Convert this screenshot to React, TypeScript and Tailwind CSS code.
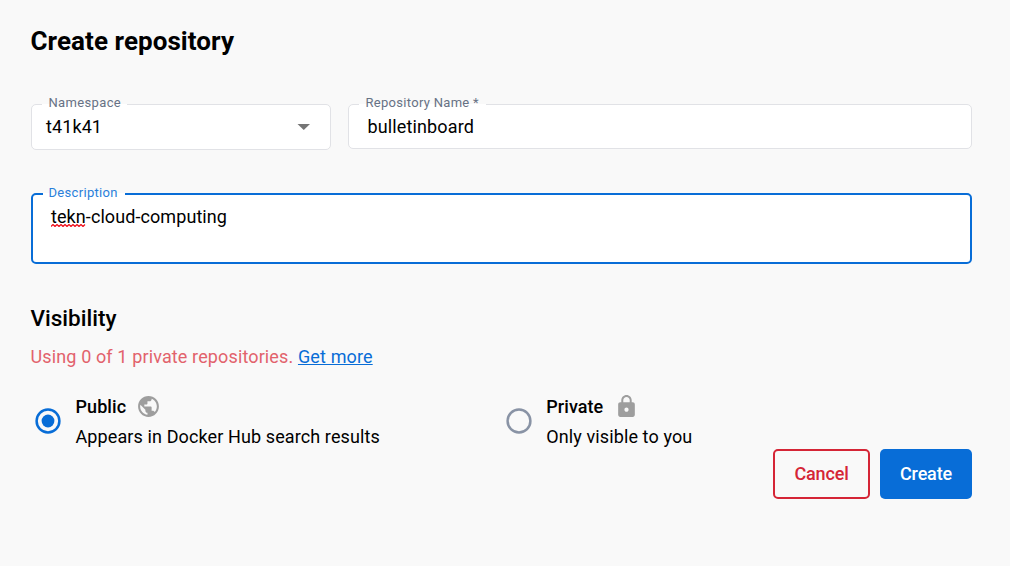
import { type ReactNode } from "react";

function OutlinedField({
  label,
  className,
  labelClassName,
  notchClassName,
  children,
}: {
  label: string;
  className: string;
  labelClassName: string;
  notchClassName: string;
  children: ReactNode;
}) {
  return (
    <div className={`relative rounded-[5px] bg-white ${className}`}>
      <span className={`absolute left-[10px] bg-white ${notchClassName}`} />
      <span className={`absolute whitespace-nowrap text-[13px] leading-4 ${labelClassName}`}>
        {label}
      </span>
      {children}
    </div>
  );
}

function Radio({ checked }: { checked?: boolean }) {
  return (
    <svg className="size-[26px] shrink-0" viewBox="0 0 26 26" fill="none">
      <circle cx="13" cy="13" r="11.400" strokeWidth="2.500" stroke={checked ? "#086dd7" : "#8993a5"} />
      {checked && <circle cx="13" cy="13" r="6.400" fill="#086dd7" />}
    </svg>
  );
}

function Option({
  title,
  text,
  icon,
  checked,
}: {
  title: string;
  text: string;
  icon: ReactNode;
  checked?: boolean;
}) {
  return (
    <div className="flex w-[470.75px] shrink-0 items-center">
      <Radio checked={checked} />
      <div className="ml-[14.5px]">
        <div className="flex h-[30px] items-center gap-[10.5px]">
          <span className="pt-[2px] text-[18px] font-medium leading-7 tracking-[0.07px]">{title}</span>
          {icon}
        </div>
        <div className="pt-px text-[18px] leading-[29px] tracking-[0.11px]">{text}</div>
      </div>
    </div>
  );
}

export default function App() {
  return (
    <main className="h-[566px] w-[1010px] overflow-hidden bg-[#f9f9f9] pl-[31px] pr-[38px] pt-[25px] font-['Roboto',sans-serif] text-black">
      <h1 className="-ml-[0.5px] h-8 text-[26px] font-bold leading-8 tracking-[0.07px]">Create repository</h1>

      <div className="mt-[47px] flex items-start gap-[17px]">
        <OutlinedField
          label="Namespace"
          className="flex h-[46px] w-[300px] items-center justify-between border border-[#e1e2e6] pl-[14px] pr-[20px]"
          labelClassName="left-[16.500px] -top-[10px] text-[#677285] tracking-[0.35px]"
          notchClassName="-top-px h-px w-[85px]"
        >
          <span className="text-[18px] leading-6 tracking-[0.1px]">t41k41</span>
          <svg className="h-[6px] w-[13px]" viewBox="0 0 13 6" fill="#757575">
            <path d="M.5 0h12.500L6.750 6z" />
          </svg>
        </OutlinedField>
        <OutlinedField
          label="Repository Name *"
          className="flex h-[45px] flex-1 items-center border border-[#e1e2e6] pl-[18.5px]"
          labelClassName="left-[16.500px] -top-[10px] text-[#677285] tracking-[0.3px]"
          notchClassName="-top-px h-px w-[127px]"
        >
          <span className="text-[18px] leading-6 tracking-[0.13px]">bulletinboard</span>
        </OutlinedField>
      </div>

      <div className="mt-[43px]">
        <OutlinedField
          label="Description"
          className="h-[71px] border-2 border-[#086dd7] pl-[18px] pt-[10px]"
          labelClassName="left-[15.500px] -top-[10px] text-[#2a7fdb] tracking-[0.32px]"
          notchClassName="-top-[2px] h-[2px] w-[82px]"
        >
          <div className="text-[18px] leading-6 tracking-[0.08px]">
            <span className="relative">
              tekn
              <svg className="absolute left-0 top-[18px] h-[3px] w-[35px]" viewBox="0 0 35 3" fill="none" stroke="#f01520" strokeWidth="1.300">
                <path d="M0 2.5L2 .5l2 2 2-2 2 2 2-2 2 2 2-2 2 2 2-2 2 2 2-2 2 2 2-2 2 2 2-2 2 2 2-2" />
              </svg>
            </span>
            -cloud-computing
          </div>
        </OutlinedField>
      </div>

      <h2 className="-ml-[0.5px] mt-[39px] h-[30px] text-[22.5px] font-medium leading-[30px]">Visibility</h2>
      <p className="-ml-[0.5px] mt-[12px] text-[18px] leading-6 tracking-[0.13px] text-[#e2626c]">
        Using 0 of 1 private repositories.{" "}
        <a className="text-[#086dd7] underline" href="#">
          Get more
        </a>
      </p>

      <div className="mt-[22px] flex pl-[4px]">
        <Option
          checked
          title="Public"
          text="Appears in Docker Hub search results"
          icon={
            <svg className="-ml-[0.75px] size-[25px]" viewBox="0 0 24 24" fill="#9e9e9e">
              <path d="M12 2C6.48 2 2 6.48 2 12s4.48 10 10 10 10-4.48 10-10S17.52 2 12 2zm-1 17.93c-3.95-.49-7-3.85-7-7.93 0-.62.08-1.21.21-1.79L9 15v1c0 1.1.9 2 2 2v1.93zm6.9-2.54c-.26-.81-1-1.39-1.9-1.39h-1v-3c0-.55-.45-1-1-1H8v-2h2c.55 0 1-.45 1-1V7h2c1.1 0 2-.9 2-2v-.41c2.93 1.19 5 4.06 5 7.41 0 2.08-.8 3.97-2.1 5.39z" />
            </svg>
          }
        />
        <Option
          title="Private"
          text="Only visible to you"
          icon={
            <svg className="size-[25px]" viewBox="0 0 24 24" fill="#9e9e9e">
              <path d="M18 8h-1V6c0-2.76-2.24-5-5-5S7 3.24 7 6v2H6c-1.1 0-2 .9-2 2v10c0 1.1.9 2 2 2h12c1.1 0 2-.9 2-2V10c0-1.1-.9-2-2-2zm-6 9c-1.1 0-2-.9-2-2s.9-2 2-2 2 .9 2 2-.9 2-2 2zm3.100-9H8.900V6c0-1.710 1.390-3.100 3.100-3.100 1.710 0 3.100 1.390 3.100 3.100v2z" />
            </svg>
          }
        />
      </div>

      <div className="-mt-[2px] flex justify-end gap-[10px] text-[18px] font-medium tracking-[-0.15px]">
        <button className="h-[50px] w-[97px] rounded-[5px] border-2 border-[#d52536] pb-px text-[#d52536]">Cancel</button>
        <button className="h-[50px] w-[92px] rounded-[5px] bg-[#086dd7] pb-px text-white">Create</button>
      </div>
    </main>
  );
}
